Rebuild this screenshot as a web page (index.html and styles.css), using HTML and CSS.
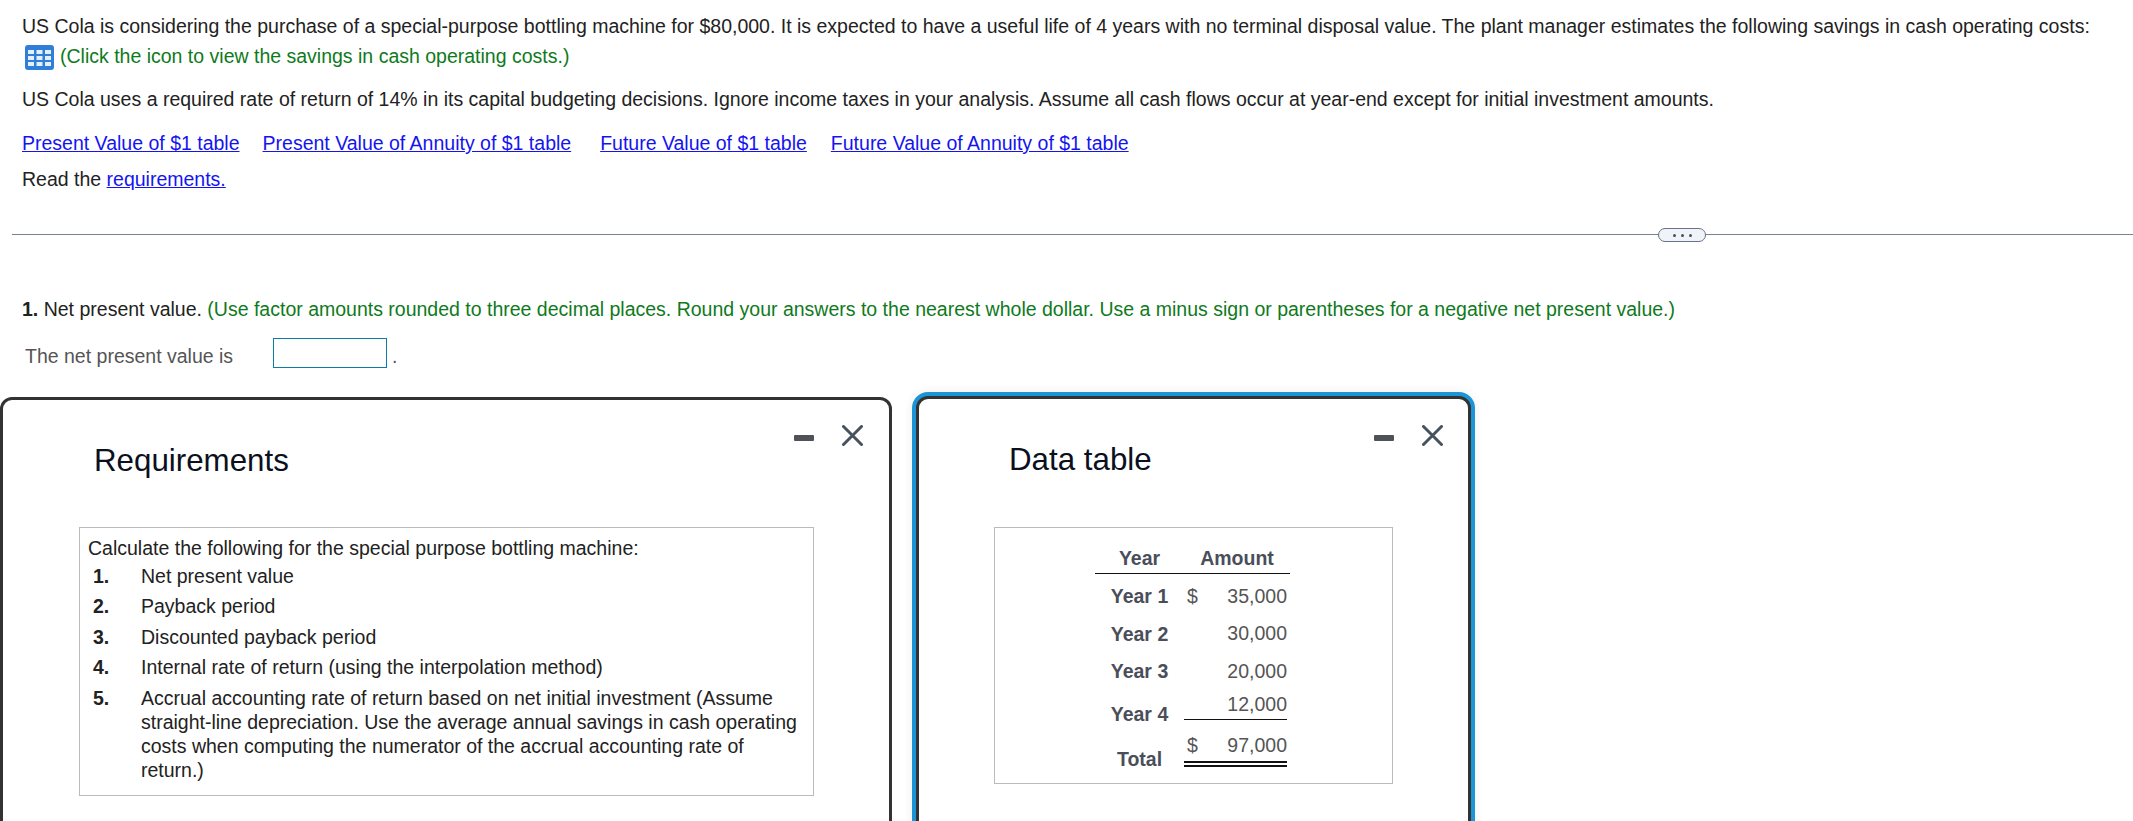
FILE: index.html
```html
<!DOCTYPE html>
<html lang="en">
<head>
    <meta charset="UTF-8">
    <title>US Cola capital budgeting</title>
    <link rel="stylesheet" href="styles.css">
</head>
<body>
<div class="prompt">
    <p class="intro">US Cola is considering the purchase of a special-purpose bottling machine for $80,000. It is expected to have a useful life of 4 years with no terminal disposal value. The plant manager estimates the following savings in cash operating costs:</p>
    <p class="hint-line">
        <svg class="grid-icon" width="29" height="25" viewBox="0 0 29 25">
            <rect width="29" height="25" rx="3" fill="#2f7fd8"/>
            <g fill="#e4effb">
                <rect x="3" y="5" width="6" height="4"/><rect x="11.500" y="5" width="6" height="4"/><rect x="20" y="5" width="6" height="4"/>
                <rect x="3" y="11" width="6" height="4"/><rect x="11.500" y="11" width="6" height="4"/><rect x="20" y="11" width="6" height="4"/>
                <rect x="3" y="17" width="6" height="4"/><rect x="11.500" y="17" width="6" height="4"/><rect x="20" y="17" width="6" height="4"/>
            </g>
        </svg>
        <span class="green hint-text">(Click the icon to view the savings in cash operating costs.)</span>
    </p>
    <p class="rate">US Cola uses a required rate of return of 14% in its capital budgeting decisions. Ignore income taxes in your analysis. Assume all cash flows occur at year-end except for initial investment amounts.</p>
    <p class="tables">
        <a href="#">Present Value of $1 table</a>
        <a href="#">Present Value of Annuity of $1 table</a>
        <a href="#">Future Value of $1 table</a>
        <a href="#">Future Value of Annuity of $1 table</a>
    </p>
    <p class="read">Read the <a href="#">requirements.</a></p>
</div>

<div class="divider">
    <button class="more"><i></i><i></i><i></i></button>
</div>

<div class="answer">
    <p class="question"><b>1.</b> Net present value. <span class="green">(Use factor amounts rounded to three decimal places. Round your answers to the nearest whole dollar. Use a minus sign or parentheses for a negative net present value.)</span></p>
    <p class="npv">
        <span class="npv-label">The net present value is</span>
        <input class="npv-input" type="text">
        <span class="npv-dot">.</span>
    </p>
</div>

<div class="windows">
    <section class="window window-req">
        <div class="window-controls">
            <span class="minimize"></span>
            <svg class="close" width="21" height="21" viewBox="0 0 21 21"><path d="M1.500 1.500 19.500 19.500M19.500 1.500 1.500 19.500" stroke="#47525f" stroke-width="3" stroke-linecap="round"/></svg>
        </div>
        <h2>Requirements</h2>
        <div class="req-box">
            <p>Calculate the following for the special purpose bottling machine:</p>
            <ol>
                <li class="r1"><b>1.</b><span>Net present value</span></li>
                <li class="r2"><b>2.</b><span>Payback period</span></li>
                <li class="r3"><b>3.</b><span>Discounted payback period</span></li>
                <li class="r4"><b>4.</b><span>Internal rate of return (using the interpolation method)</span></li>
                <li class="r5"><b>5.</b><span>Accrual accounting rate of return based on net initial investment (Assume straight-line depreciation. Use the average annual savings in cash operating costs when computing the numerator of the accrual accounting rate of return.)</span></li>
            </ol>
        </div>
    </section>

    <section class="window window-data">
        <div class="window-controls">
            <span class="minimize"></span>
            <svg class="close" width="21" height="21" viewBox="0 0 21 21"><path d="M1.500 1.500 19.500 19.500M19.500 1.500 1.500 19.500" stroke="#47525f" stroke-width="3" stroke-linecap="round"/></svg>
        </div>
        <h2>Data table</h2>
        <div class="data-box">
            <div class="data-grid">
                <div class="head head-year">Year</div>
                <div class="head head-amount">Amount</div>

                <div class="label l1">Year 1</div>
                <div class="money m1"><span>$</span><span>35,000</span></div>
                <div class="label l2">Year 2</div>
                <div class="money m2"><span></span><span>30,000</span></div>
                <div class="label l3">Year 3</div>
                <div class="money m3"><span></span><span>20,000</span></div>
                <div class="label l4">Year 4</div>
                <div class="money m4"><span></span><span>12,000</span></div>
                <div class="label l5">Total</div>
                <div class="money m5"><span>$</span><span>97,000</span></div>
            </div>
        </div>
    </section>
</div>
</body>
</html>
```
FILE: styles.css
```css
/* Global Styles */
html, body {
    height: 821px;
    overflow: hidden;
}

body {
    margin: 0;
    font-family: 'Liberation Sans', Arial, sans-serif;
    font-size: 19.5px;
    line-height: 24px;
    color: #222;
    background-color: white;
}

p {
    margin: 0;
}

a {
    color: #1414f0;
    text-decoration: underline;
}

.green {
    color: #0f7a1c;
}

.prompt {
    padding: 14px 0 0 22px;
}

.hint-line {
    margin: 7px 0 0 3px;
    display: flex;
    align-items: center;
    gap: 6px;
    height: 25px;
}

.hint-text {
    margin-top: -3px;
}

.rate {
    margin-top: 17px;
}

.tables {
    margin-top: 20px;
    display: flex;
}

.tables a:nth-child(1) { margin-right: 23px; }
.tables a:nth-child(2) { margin-right: 29px; }
.tables a:nth-child(3) { margin-right: 24px; }

.read {
    margin-top: 12px;
}

.divider {
    margin: 43px 0 0 12px;
    height: 1px;
    background-color: #78818f;
    position: relative;
}

.more {
    position: absolute;
    left: 1646px;
    top: -6px;
    width: 48px;
    height: 14px;
    padding: 0;
    border: 1.500px solid #66738a;
    border-radius: 7px;
    background-color: #f0f3f7;
    display: flex;
    justify-content: center;
    align-items: center;
    gap: 5px;
}

.more i {
    width: 3px;
    height: 3px;
    border-radius: 50%;
    background-color: #47525f;
}

.answer {
    padding: 62px 0 0 22px;
}

.npv {
    margin-top: 17px;
    display: flex;
    align-items: center;
    height: 30px;
    color: #555;
}

.npv-label {
    margin: 5px 0 0 3px;
    width: 248px;
}

.npv-input {
    box-sizing: border-box;
    width: 114px;
    height: 30px;
    border: 1px solid #0a7fa5;
    padding: 0;
    background-color: white;
}

.npv-dot {
    margin: 5px 0 0 5px;
}

.windows {
    margin-top: 29px;
    display: flex;
    align-items: flex-start;
    height: 500px;
}

.window {
    box-sizing: border-box;
    height: 500px;
    background-color: white;
    border: 3px solid #333;
    border-radius: 12px;
    position: relative;
}

.window h2 {
    margin: 0;
    font-size: 31.300px;
    font-weight: normal;
    line-height: 40px;
    color: #0a1020;
}

.window-req {
    width: 892px;
    padding: 41px 0 0 91px;
    margin-right: 24px;
}

.window-data {
    width: 555px;
    margin-top: -1px;
    padding: 41px 0 0 90px;
    box-shadow: 0 0 0 4px #1b95d6, 0 0 8px 5px rgba(0, 0, 0, 0.06);
}

.window-controls {
    position: absolute;
    top: 25px;
    right: 26px;
    display: flex;
    align-items: center;
    gap: 28px;
}

.window-data .window-controls {
    top: 26px;
    right: 25px;
}

.minimize {
    width: 20px;
    height: 6px;
    border-radius: 1px;
    background-color: #4f5257;
    margin-top: 5px;
}

.req-box {
    box-sizing: border-box;
    width: 735px;
    height: 269px;
    margin: 46px 0 0 -15px;
    border: 1.500px solid #bbb;
    padding: 8px 8px 0 8px;
}

.req-box ol {
    list-style: none;
    margin: 0;
    padding: 0;
}

.req-box li {
    display: flex;
}

.req-box li b {
    flex: 0 0 53px;
    padding-left: 5px;
    box-sizing: border-box;
}

.r1 { margin-top: 4px; }
.r2, .r3, .r4, .r5 { margin-top: 6.400px; }

.data-box {
    box-sizing: border-box;
    width: 399px;
    height: 257px;
    margin: 47px 0 0 -15px;
    border: 1.500px solid #bbb;
    padding-left: 100px;
    color: #555;
}

.data-grid {
    display: grid;
    width: 195px;
    margin-top: 14px;
    grid-template-columns: 89px 106px;
    grid-template-rows: 32px 44px 32px 42px 28px 16px 31px;
}

.head {
    color: #4a4e5a;
    font-weight: bold;
    text-align: center;
    border-bottom: 1.500px solid #111;
    box-sizing: border-box;
    padding-top: 4px;
}

.head-year { grid-row: 1; grid-column: 1; }
.head-amount { grid-row: 1; grid-column: 2; }

.label {
    color: #4a4e5a;
    font-weight: bold;
    grid-column: 1;
    display: flex;
    justify-content: center;
    align-items: center;
}

.l1 { grid-row: 2; }
.l2 { grid-row: 3; }
.l3 { grid-row: 4; }
.l4 { grid-row: 5 / 7; }
.l5 { grid-row: 7; align-items: flex-end; line-height: 16px; }

.money {
    grid-column: 2;
    display: flex;
    justify-content: space-between;
    margin-right: 3px;
    padding-left: 3px;
    box-sizing: border-box;
}

.m1 { grid-row: 2; align-items: center; }
.m2 { grid-row: 3; align-items: center; padding-bottom: 2px; }
.m3 { grid-row: 4; align-items: center; }
.m4 { grid-row: 5; align-items: flex-end; border-bottom: 1.500px solid #111; padding-bottom: 3px; }
.m5 { grid-row: 6 / 8; align-items: flex-start; border-bottom: 6px double #111; padding-top: 13px; }
```
